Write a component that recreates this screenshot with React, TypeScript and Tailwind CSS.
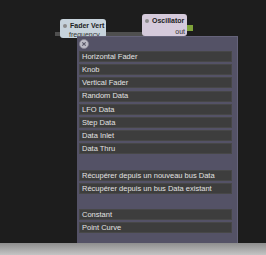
const items = [
  "Horizontal Fader",
  "Knob",
  "Vertical Fader",
  "Random Data",
  "LFO Data",
  "Step Data",
  "Data Inlet",
  "Data Thru",
  "",
  "Récupérer depuis un nouveau bus Data",
  "Récupérer depuis un bus Data existant",
  "",
  "Constant",
  "Point Curve",
];

const Node = ({ title, className, children }: { title: string; className: string; children?: React.ReactNode }) => (
  <div className={`absolute rounded-[3px] ${className}`}>
    <div className="flex items-center gap-[3px] pl-[3px] pt-[3px] text-[7px] leading-[8px] font-bold text-[#1c1c1c] whitespace-nowrap">
      <span className="w-[4px] h-[4px] rounded-full bg-[#8c8c8c]" />
      {title}
    </div>
    {children}
  </div>
);

export default function App() {
  return (
    <div
      className="relative w-[266px] h-[255px] overflow-hidden bg-[#1d1d1d]"
      style={{ fontFamily: '"Liberation Sans", Arial, sans-serif' }}
    >
      {/* patch cord */}
      <div className="absolute left-[55px] top-[32px] w-[90px] h-[4px] bg-[#4f4f4f]" />

      <Node title="Fader Vert" className="left-[60px] top-[19px] w-[46px] h-[19px] bg-[#c7d3dc]">
        <div className="pl-[9px] pt-[1px] text-[7px] leading-[8px] text-[#333] whitespace-nowrap">frequency</div>
      </Node>

      <Node title="Oscillator" className="left-[142px] top-[14px] w-[45px] h-[22px] bg-[#d5cadb]">
        <div className="pr-[2px] pt-[3px] text-right text-[7px] leading-[8px] text-[#333]">out</div>
        <span className="absolute -right-[6px] top-[11px] w-[6px] h-[6px] bg-[#7fa33a]" />
      </Node>

      {/* menu */}
      <div className="absolute left-[77px] top-[36px] w-[161px] h-[207px] bg-[#545266] border-t border-r border-[#65637a] flex flex-col">
        <div className="pl-[2px] pt-[2px] h-[14px]">
          <svg width="10" height="10" viewBox="0 0 10 10">
            <circle cx="5" cy="5" r="4.5" fill="#bdbcc6" stroke="#8a8896" strokeWidth="0.8" />
            <path d="M3.3 3.3 L6.7 6.7 M6.7 3.3 L3.3 6.7" stroke="#5a5868" strokeWidth="1.1" />
          </svg>
        </div>
        <div className="flex flex-col gap-[2.2px] pl-[2px] pr-[5px]">
          {items.map((t, i) =>
            t ? (
              <div
                key={i}
                className="h-[11px] flex items-center px-[2px] bg-[#3d3d3d] border border-[#474747] text-[7.5px] text-[#e2e2e2] whitespace-nowrap"
              >
                {t}
              </div>
            ) : (
              <div key={i} className="h-[11px]" />
            )
          )}
        </div>
      </div>

      {/* bottom bar */}
      <div className="absolute left-0 right-0 bottom-0 h-[12px] bg-gradient-to-b from-[#8e8e8e] to-[#c4c4c4]" />
    </div>
  );
}
